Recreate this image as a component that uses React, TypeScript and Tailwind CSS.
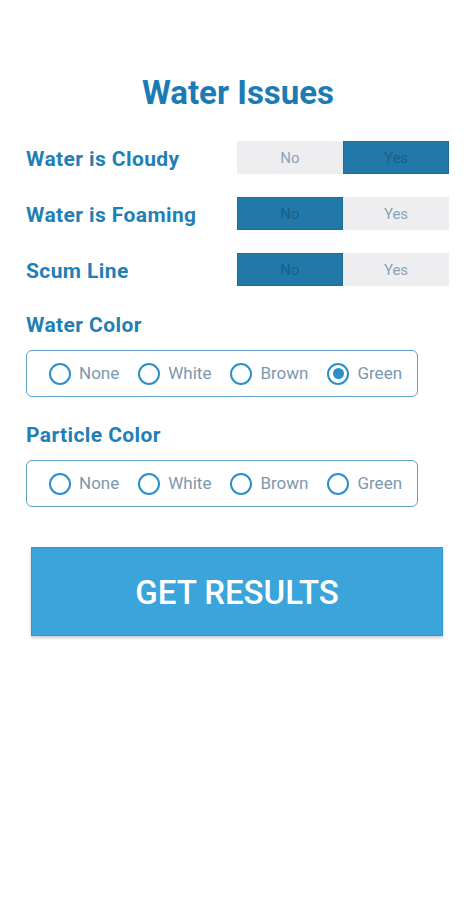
import { useState } from "react";

const font = { fontFamily: "Roboto, 'Liberation Sans', sans-serif" };

function Toggle({ value, onChange }: { value: boolean; onChange: (v: boolean) => void }) {
  const seg = (on: boolean) =>
    on
      ? "bg-[#2279a9] text-[#17608c] border border-[#1d6c99]"
      : "bg-[#eeeef0] text-[#8ba3b6] border border-[#eeeef0]";
  return (
    <div className="flex w-[212px] h-[33px] text-[15px]">
      <button className={"flex-1 flex items-center justify-center pt-[2px] " + seg(!value)} onClick={() => onChange(false)}>No</button>
      <button className={"flex-1 flex items-center justify-center pt-[2px] " + seg(value)} onClick={() => onChange(true)}>Yes</button>
    </div>
  );
}

function Radios({ value, onChange }: { value: string; onChange: (v: string) => void }) {
  const opts = ["None", "White", "Brown", "Green"];
  return (
    <div className="w-[392px] h-[47px] rounded-[6px] border-[1.5px] border-[#5b9fc9] flex items-center pl-[22px]">
      {opts.map((o, i) => (
        <button
          key={o}
          className={"flex items-center gap-[8px] " + (i === 0 ? "" : "ml-[19px]")}
          onClick={() => onChange(o)}
        >
          <span className="w-[22px] h-[22px] rounded-full border-2 border-[#2d8fc7] flex items-center justify-center">
            {value === o && <span className="w-[11px] h-[11px] rounded-full bg-[#2d8fc7]" />}
          </span>
          <span className="text-[17px] text-[#7b98ad]">{o}</span>
        </button>
      ))}
    </div>
  );
}

export default function App() {
  const [cloudy, setCloudy] = useState(true);
  const [foam, setFoam] = useState(false);
  const [scum, setScum] = useState(false);
  const [water, setWater] = useState("Green");
  const [particle, setParticle] = useState("");

  const rows: [string, boolean, (v: boolean) => void][] = [
    ["Water is Cloudy", cloudy, setCloudy],
    ["Water is Foaming", foam, setFoam],
    ["Scum Line", scum, setScum],
  ];

  return (
    <div className="min-h-[900px] bg-white" style={font}>
      <h1 className="pt-[73px] text-center text-[33px] leading-[40px] font-bold text-[#1b7bb4]">Water Issues</h1>
      <div className="mt-[28px] pl-[26px] pr-[27px] flex flex-col gap-[23px]">
        {rows.map(([label, v, set]) => (
          <div key={label} className="flex items-center justify-between">
            <span className="text-[21px] tracking-[0.4px] font-bold text-[#1f7fb6] leading-[28px] pt-[2px]">{label}</span>
            <Toggle value={v} onChange={set} />
          </div>
        ))}
      </div>
      <div className="pl-[26px] mt-[25px]">
        <div className="text-[21px] tracking-[0.4px] font-bold text-[#1f7fb6] leading-[28px]">Water Color</div>
        <div className="mt-[11px]"><Radios value={water} onChange={setWater} /></div>
        <div className="mt-[24px] text-[21px] tracking-[0.4px] font-bold text-[#1f7fb6] leading-[28px]">Particle Color</div>
        <div className="mt-[11px]"><Radios value={particle} onChange={setParticle} /></div>
      </div>
      <div className="pl-[31px] mt-[40px]">
        <button className="w-[412px] h-[89px] bg-[#3ba4da] border border-[#2f98d0] shadow-[0_2px_3px_rgba(0,0,0,0.2)] text-white text-[33px] font-medium pt-[2px]">
          GET RESULTS
        </button>
      </div>
    </div>
  );
}
